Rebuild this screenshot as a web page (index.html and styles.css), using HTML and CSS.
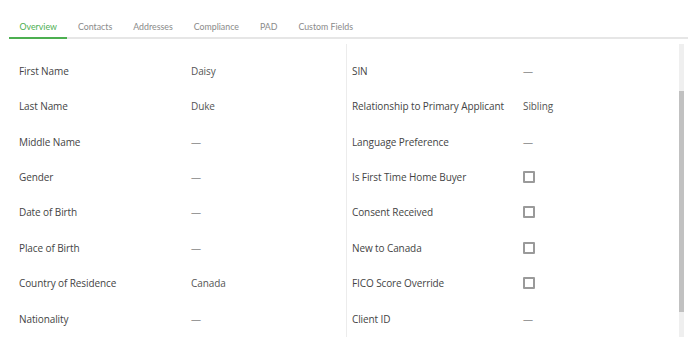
FILE: index.html
```html
<!DOCTYPE html>
<html lang="en">
<head>
    <meta charset="UTF-8">
    <title>Applicant Overview</title>
    <link rel="stylesheet" href="styles.css">
</head>
<body>

    <div class="tabs">
        <a href="#" class="tab active">Overview</a>
        <a href="#" class="tab">Contacts</a>
        <a href="#" class="tab">Addresses</a>
        <a href="#" class="tab">Compliance</a>
        <a href="#" class="tab">PAD</a>
        <a href="#" class="tab">Custom Fields</a>
    </div>

    <div class="panel">
        <div class="details">
            <div class="column left">
                <div class="row"><span class="label">First Name</span><span class="value">Daisy</span></div>
                <div class="row"><span class="label">Last Name</span><span class="value">Duke</span></div>
                <div class="row"><span class="label">Middle Name</span><span class="value empty">—</span></div>
                <div class="row"><span class="label">Gender</span><span class="value empty">—</span></div>
                <div class="row"><span class="label">Date of Birth</span><span class="value empty">—</span></div>
                <div class="row"><span class="label">Place of Birth</span><span class="value empty">—</span></div>
                <div class="row"><span class="label">Country of Residence</span><span class="value">Canada</span></div>
                <div class="row"><span class="label">Nationality</span><span class="value empty">—</span></div>
            </div>
            <div class="column right">
                <div class="row"><span class="label">SIN</span><span class="value empty">—</span></div>
                <div class="row"><span class="label">Relationship to Primary Applicant</span><span class="value">Sibling</span></div>
                <div class="row"><span class="label">Language Preference</span><span class="value empty">—</span></div>
                <div class="row"><span class="label">Is First Time Home Buyer</span><span class="value"><span class="check"></span></span></div>
                <div class="row"><span class="label">Consent Received</span><span class="value"><span class="check"></span></span></div>
                <div class="row"><span class="label">New to Canada</span><span class="value"><span class="check"></span></span></div>
                <div class="row"><span class="label">FICO Score Override</span><span class="value"><span class="check"></span></span></div>
                <div class="row"><span class="label">Client ID</span><span class="value empty">—</span></div>
            </div>
        </div>
        <div class="scrollbar"><div class="thumb"></div></div>
    </div>

</body>
</html>
```

FILE: styles.css
```css
body {
    margin: 0;
    padding: 0;
    font-family: "Open Sans", sans-serif;
    background: #fff;
}
.tabs {
    display: flex;
    margin-left: 9px;
    border-bottom: 2px solid #e6e6e6;
}
.tab {
    padding: 20px 10.5px 4px;
    font-family: Lato, sans-serif;
    font-size: 8.8px;
    line-height: 13px;
    color: #8a8a8a;
    text-decoration: none;
    border-bottom: 2px solid transparent;
    margin-bottom: -2px;
}
.tab.active {
    color: #4caf50;
    border-bottom-color: #4caf50;
}
.panel {
    display: flex;
    height: 298px;
    margin-left: 9px;
    padding-top: 5px;
    box-sizing: border-box;
}
.details {
    flex: 1;
    display: flex;
}
.column {
    padding-top: 9px;
}
.column.left {
    width: 337px;
    border-right: 1px solid #ececec;
}
.column.right {
    flex: 1;
}
.row {
    display: flex;
    align-items: center;
    height: 35.45px;
    font-size: 10px;
    letter-spacing: -0.1px;
    color: #444;
}
.left .label {
    width: 172px;
    padding-left: 10px;
}
.right .label {
    width: 171px;
    padding-left: 5px;
}
.value {
    color: #555;
}
.value.empty {
    color: #999;
}
.check {
    display: block;
    width: 8px;
    height: 8px;
    border: 2px solid #9a9a9a;
    border-radius: 1px;
}
.scrollbar {
    width: 5px;
    margin-right: 4px;
    background: #efefef;
}
.thumb {
    height: 221px;
    margin-top: 47px;
    background: #c1c1c1;
}
```
